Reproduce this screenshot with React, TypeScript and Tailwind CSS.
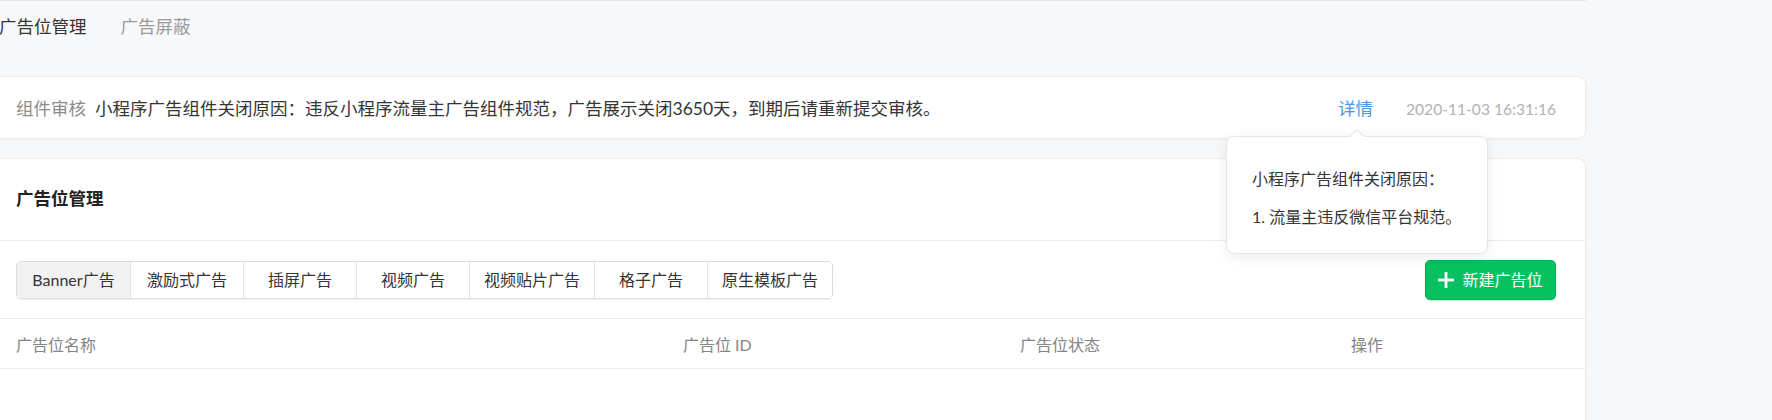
import React from "react";

const adTypes = ["Banner广告", "激励式广告", "插屏广告", "视频广告", "视频贴片广告", "格子广告", "原生模板广告"];

const PlusIcon = () => (
  <svg width="16" height="16" viewBox="0 0 16 16" fill="#fff">
    <rect x="6.6" y="0" width="2.8" height="16" />
    <rect x="0" y="6.6" width="16" height="2.8" />
  </svg>
);

export default function App() {
  return (
    <div className="min-h-[420px] w-[1772px] overflow-hidden bg-[#f7f8fa] font-['Lato','Noto_Sans_CJK_SC',sans-serif]">
      <div className="-ml-[14px] w-[1600px] border-t border-[#e6e7ea]">
        {/* top tabs */}
        <div className="flex h-[75px] items-start gap-[34px] pl-[13px] pt-[15px] text-[17.5px] leading-[22px]">
          <span className="text-[#353535]">广告位管理</span>
          <span className="text-[#9b9b9b]">广告屏蔽</span>
        </div>

        {/* review notice */}
        <div className="relative z-10 flex h-[63px] items-center rounded-[8px] border border-[#ececec] bg-white px-[29px] pt-[2px] text-[17.5px] leading-[24px] shadow-[0_1px_3px_rgba(0,0,0,0.04)]">
          <span className="text-[#8c8c8c]">组件审核</span>
          <span className="ml-[9px] text-[#353535]">
            小程序广告组件关闭原因：违反小程序流量主广告组件规范，广告展示关闭3650天，到期后请重新提交审核。
          </span>
          <span className="ml-auto text-[#4b95ea]">详情</span>
          <span className="ml-[33px] text-[15.6px] text-[#b2b2b2]">2020-11-03 16:31:16</span>

          {/* popover */}
          <div className="absolute right-[97px] top-[59px] h-[118px] w-[262px] rounded-[8px] border border-[#e6e6e6] bg-white px-[25px] pt-[30px] text-[16px] leading-[24px] text-[#353535] shadow-[0_3px_14px_rgba(0,0,0,0.08)]">
            <div className="absolute -top-[6px] left-[125px] h-[10px] w-[10px] rotate-45 border-l border-t border-[#e6e6e6] bg-white" />
            <p>小程序广告组件关闭原因：</p>
            <p className="mt-[14px]">1. 流量主违反微信平台规范。</p>
          </div>
        </div>

        {/* ad slot management */}
        <div className="mt-[19px] flex flex-col rounded-t-[8px] border border-b-0 border-[#ececec] bg-white shadow-[0_1px_3px_rgba(0,0,0,0.04)]">
          <div className="flex h-[82px] items-center border-b border-[#ededed] px-[29px] text-[17.5px] font-bold text-[#222]">
            广告位管理
          </div>

          <div className="flex h-[78px] items-center justify-between border-b border-[#ededed] px-[29px]">
            <div className="flex h-[38px] overflow-hidden rounded-[5px] border border-[#dcdcdc] shadow-[0_1px_1px_rgba(0,0,0,0.05)]">
              {adTypes.map((t, i) => (
                <button
                  key={t}
                  className={
                    "flex min-w-[113px] items-center justify-center px-[14px] text-[16px] text-[#353535] " +
                    (i === 0 ? "bg-[#f2f2f2]" : "border-l border-[#e3e3e3] bg-white")
                  }
                >
                  {t}
                </button>
              ))}
            </div>

            <button className="flex h-[40px] w-[131px] items-center justify-center gap-[8px] rounded-[5px] border border-[#06ad56] bg-[#07c160] text-[16px] text-white shadow-[0_1px_2px_rgba(7,193,96,0.25)]">
              <PlusIcon />
              新建广告位
            </button>
          </div>

          <div className="grid h-[50px] grid-cols-[667px_337px_331px_1fr] items-center border-b border-[#ededed] px-[29px] pt-[3px] text-[16px] text-[#858585]">
            <span>广告位名称</span>
            <span>广告位 ID</span>
            <span>广告位状态</span>
            <span>操作</span>
          </div>

          <div className="h-[60px]" />
        </div>
      </div>
    </div>
  );
}
